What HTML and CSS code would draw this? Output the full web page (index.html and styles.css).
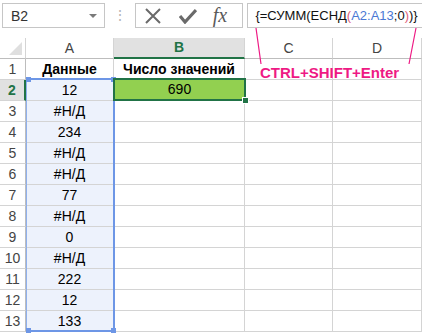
FILE: index.html
```html
<!DOCTYPE html>
<html lang="ru">
<head>
    <meta charset="UTF-8">
    <title>ЕСНД массив</title>
    <link rel="stylesheet" href="styles.css">
</head>
<body>
    <!-- строка формул -->
    <div class="formula-bar">
        <div class="name-box">
            <span>B2</span>
            <span class="drop-arrow"></span>
        </div>
        <div class="grip">⋮</div>
        <div class="fx-box">
            <svg class="ico" width="18" height="16" viewBox="0 0 18 16">
                <path d="M2 1 L16 15 M16 1 L2 15" stroke="#6a6a6a" stroke-width="2" fill="none"/>
            </svg>
            <svg class="ico" width="18" height="16" viewBox="0 0 18 16">
                <path d="M1 8 L6 14 L17 2" stroke="#6a6a6a" stroke-width="3.2" fill="none"/>
            </svg>
            <span class="fx">fx</span>
        </div>
        <div class="formula-input">{=СУММ(ЕСНД<span class="par">(</span><span class="ref">A2:A13</span>;0<span class="par">)</span>)}</div>
    </div>

    <!-- лист -->
    <div class="sheet">
        <div class="corner"><span class="tri"></span></div>
        <div class="col-head">A</div>
        <div class="col-head active">B</div>
        <div class="col-head">C</div>
        <div class="col-head">D</div>

        <div class="row-head">1</div>
        <div class="cell bold">Данные</div>
        <div class="cell bold">Число значений</div>
        <div class="cell"></div>
        <div class="cell"></div>

        <div class="row-head active">2</div>
        <div class="cell ref-cell">12</div>
        <div class="cell">690</div>
        <div class="cell"></div>
        <div class="cell"></div>

        <div class="row-head">3</div>
        <div class="cell ref-cell">#Н/Д</div>
        <div class="cell"></div><div class="cell"></div><div class="cell"></div>

        <div class="row-head">4</div>
        <div class="cell ref-cell">234</div>
        <div class="cell"></div><div class="cell"></div><div class="cell"></div>

        <div class="row-head">5</div>
        <div class="cell ref-cell">#Н/Д</div>
        <div class="cell"></div><div class="cell"></div><div class="cell"></div>

        <div class="row-head">6</div>
        <div class="cell ref-cell">#Н/Д</div>
        <div class="cell"></div><div class="cell"></div><div class="cell"></div>

        <div class="row-head">7</div>
        <div class="cell ref-cell">77</div>
        <div class="cell"></div><div class="cell"></div><div class="cell"></div>

        <div class="row-head">8</div>
        <div class="cell ref-cell">#Н/Д</div>
        <div class="cell"></div><div class="cell"></div><div class="cell"></div>

        <div class="row-head">9</div>
        <div class="cell ref-cell">0</div>
        <div class="cell"></div><div class="cell"></div><div class="cell"></div>

        <div class="row-head">10</div>
        <div class="cell ref-cell">#Н/Д</div>
        <div class="cell"></div><div class="cell"></div><div class="cell"></div>

        <div class="row-head">11</div>
        <div class="cell ref-cell">222</div>
        <div class="cell"></div><div class="cell"></div><div class="cell"></div>

        <div class="row-head">12</div>
        <div class="cell ref-cell">12</div>
        <div class="cell"></div><div class="cell"></div><div class="cell"></div>

        <div class="row-head">13</div>
        <div class="cell ref-cell">133</div>
        <div class="cell"></div><div class="cell"></div><div class="cell"></div>

        <!-- выделенный диапазон A2:A13 -->
        <div class="range-box">
            <span class="knob k-tl"></span>
            <span class="knob k-tr"></span>
            <span class="knob k-bl"></span>
            <span class="knob k-br"></span>
        </div>

        <!-- активная ячейка B2 -->
        <div class="active-cell">690<span class="fill-handle"></span></div>
    </div>

    <!-- подсказка поверх -->
    <svg class="callout-lines" width="422" height="70" viewBox="0 0 422 70">
        <path d="M256 28 L261 64 M416 28 L409 64" stroke="#ee1a84" stroke-width="1.2" fill="none"/>
    </svg>
    <div class="callout">CTRL+SHIFT+Enter</div>
</body>
</html>
```

FILE: styles.css
```css
* {
    margin: 0;
    padding: 0;
    box-sizing: border-box;
}

body {
    font-family: 'Liberation Sans', Arial, sans-serif;
    background-color: #ffffff;
    width: 422px;
    height: 334px;
    position: relative;
    overflow: hidden;
    color: #000;
}

/* строка формул */
.formula-bar {
    height: 38px;
    display: flex;
    align-items: flex-start;
    padding-top: 3px;
    padding-left: 2px;
}

.name-box {
    width: 103px;
    height: 25px;
    border: 1px solid #c6c6c6;
    display: flex;
    align-items: center;
    justify-content: space-between;
    padding: 0 7px 0 8px;
    font-size: 14px;
    color: #333;
}

.drop-arrow {
    width: 0;
    height: 0;
    border-left: 4px solid transparent;
    border-right: 4px solid transparent;
    border-top: 4px solid #7a7a7a;
}

.grip {
    width: 30px;
    text-align: center;
    color: #b4b4b4;
    font-size: 14px;
    line-height: 25px;
}

.fx-box {
    width: 109px;
    height: 25px;
    border: 1px solid #c6c6c6;
    display: flex;
    align-items: center;
    gap: 17px;
    padding-left: 8px;
}

.fx {
    font-family: 'Liberation Serif', 'Times New Roman', serif;
    font-style: italic;
    font-size: 20px;
    color: #5a5a5a;
    margin-left: -1px;
}

.formula-input {
    margin-left: 4px;
    width: 175px;
    height: 25px;
    border: 1px solid #c6c6c6;
    border-right: none;
    font-size: 13px;
    line-height: 23px;
    padding-left: 7px;
    white-space: nowrap;
    color: #111;
}

.formula-input .par {
    color: #e0607a;
}

.formula-input .ref {
    color: #4a78d4;
}

/* лист */
.sheet {
    position: relative;
    display: grid;
    grid-template-columns: 26px 88px 131px 88px 89px;
    grid-template-rows: 21px repeat(13, 21px);
}

.corner {
    border-right: 1px solid #d4d4d4;
    border-bottom: 1px solid #bdbdbd;
    position: relative;
}

.tri {
    position: absolute;
    right: 3px;
    bottom: 3px;
    width: 0;
    height: 0;
    border-left: 13px solid transparent;
    border-bottom: 13px solid #dfdfdf;
}

.col-head {
    border-right: 1px solid #d4d4d4;
    border-bottom: 1px solid #bdbdbd;
    text-align: center;
    font-size: 14px;
    line-height: 20px;
    color: #444;
}

.col-head.active {
    background-color: #e1e1e1;
    color: #217346;
    font-weight: bold;
    border-bottom: 2px solid #217346;
    line-height: 19px;
}

.row-head {
    border-right: 1px solid #bdbdbd;
    border-bottom: 1px solid #d4d4d4;
    text-align: center;
    font-size: 14px;
    line-height: 20px;
    color: #444;
}

.row-head.active {
    background-color: #e1e1e1;
    color: #217346;
    font-weight: bold;
    border-right: 2px solid #217346;
}

.cell {
    border-right: 1px solid #d4d4d4;
    border-bottom: 1px solid #d4d4d4;
    text-align: center;
    font-size: 14px;
    line-height: 20px;
    white-space: nowrap;
}

.cell.bold {
    font-weight: bold;
}

.ref-cell {
    background-color: #edf2fc;
}

.range-box {
    position: absolute;
    left: 26px;
    top: 40px;
    width: 89px;
    height: 254px;
    border: 2px solid #6d96e6;
    border-left: 1px solid #8fb0ec;
}

.knob {
    position: absolute;
    width: 5px;
    height: 5px;
    background-color: #6d96e6;
}

.k-tl { left: -1px; top: -3px; }
.k-tr { right: -3px; top: -3px; }
.k-bl { left: -1px; bottom: -3px; }
.k-br { right: -3px; bottom: -3px; }

.active-cell {
    position: absolute;
    left: 113px;
    top: 40px;
    width: 133px;
    height: 23px;
    background-color: #92d050;
    border: 2px solid #217346;
    text-align: center;
    font-size: 14px;
    line-height: 19px;
}

.fill-handle {
    position: absolute;
    right: -5px;
    bottom: -5px;
    width: 7px;
    height: 7px;
    background-color: #217346;
    border: 1px solid #fff;
}

/* подсказка */
.callout-lines {
    position: absolute;
    left: 0;
    top: 0;
}

.callout {
    position: absolute;
    left: 260px;
    top: 64px;
    font-size: 15px;
    font-weight: bold;
    color: #ee1a84;
    white-space: nowrap;
}
```
